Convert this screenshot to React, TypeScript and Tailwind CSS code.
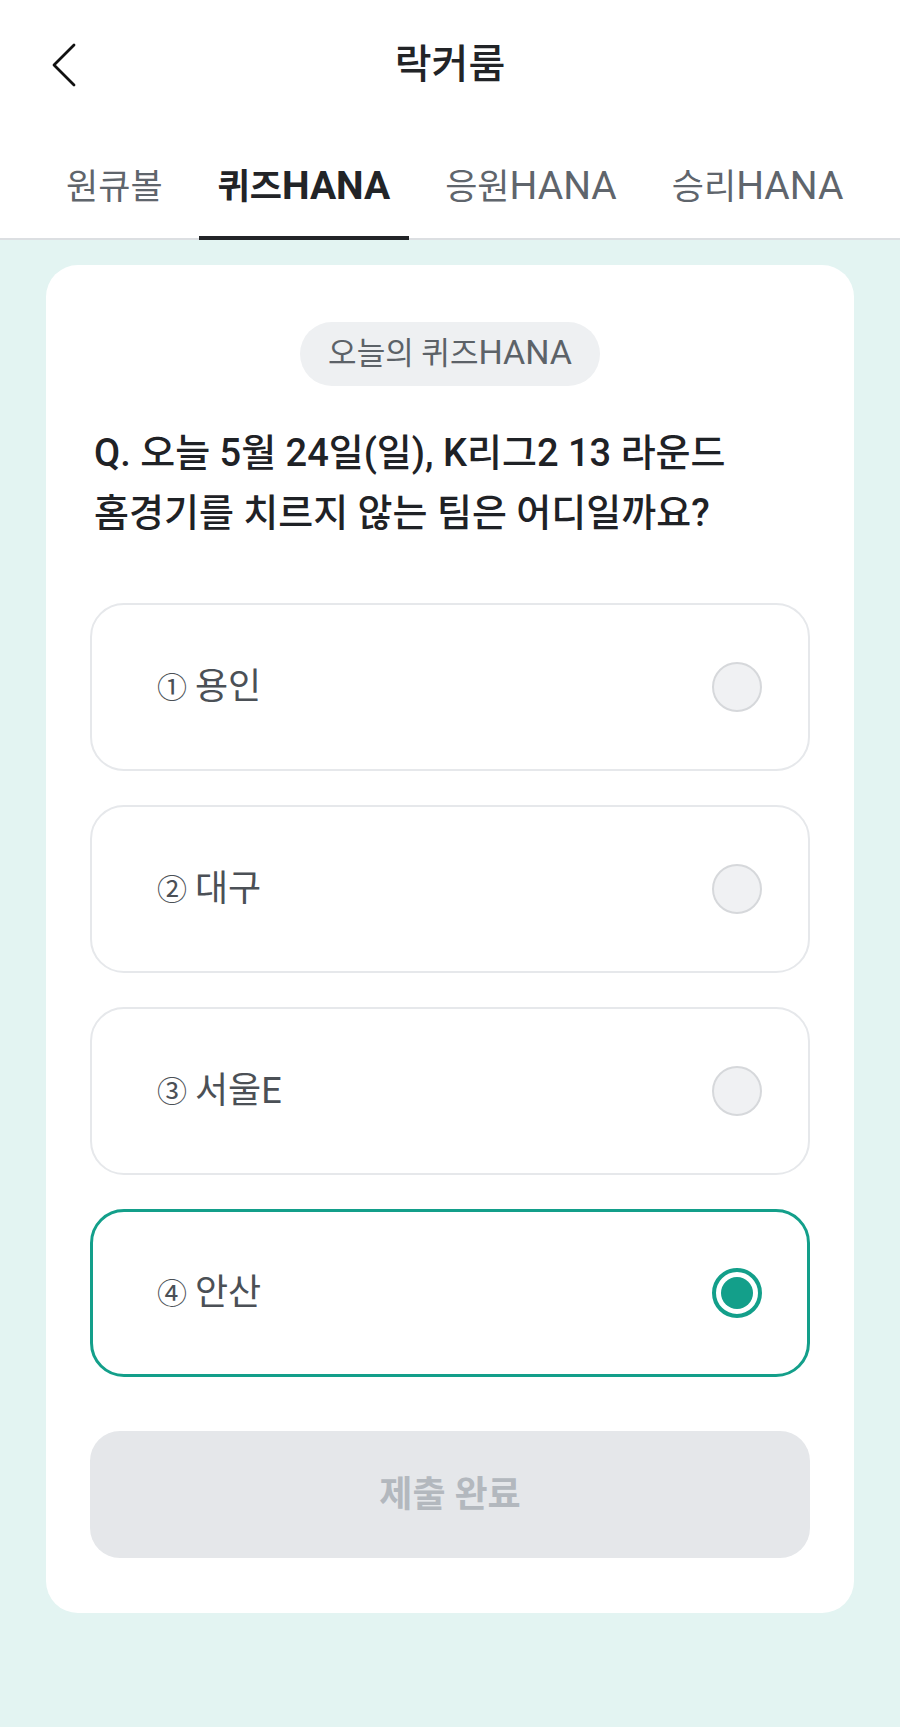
import { useState } from "react";

const FONT = "font-['Roboto','Noto_Sans_CJK_KR',sans-serif]";

const tabs = [
  { ko: "원큐볼", en: "" },
  { ko: "퀴즈", en: "HANA" },
  { ko: "응원", en: "HANA" },
  { ko: "승리", en: "HANA" },
];

const options = [
  { no: "①", label: "용인" },
  { no: "②", label: "대구" },
  { no: "③", label: "서울E" },
  { no: "④", label: "안산" },
];

export default function App() {
  const [activeTab, setActiveTab] = useState(1);
  const [picked, setPicked] = useState(3);

  return (
    <div className={`w-[900px] min-h-[1727px] bg-[#e3f4f2] ${FONT}`}>
      {/* Header */}
      <div className="bg-white">
        <div className="relative flex h-[128px] items-center justify-center">
          <button className="absolute left-[46px] top-[38px] p-1">
            <svg width="28" height="46" viewBox="0 0 28 46" fill="none" stroke="#111" strokeWidth="2.8" strokeLinecap="round" strokeLinejoin="round">
              <polyline points="24,3 4,23 24,43" />
            </svg>
          </button>
          <h1 className="mt-[2px] text-[40px] font-medium text-[#222427]">락커룸</h1>
        </div>

        {/* Tabs */}
        <div className="flex h-[112px] gap-[17px] border-b-2 border-[#dcdfe2] pl-[47px]">
          {tabs.map((t, i) => (
            <button
              key={t.ko}
              onClick={() => setActiveTab(i)}
              className={
                i === activeTab
                  ? "-mb-[2px] flex items-center border-b-4 border-[#222427] px-[19px] pt-[13px] text-[35px] font-bold text-[#222427]"
                  : "-mb-[2px] flex items-center border-b-4 border-transparent px-[19px] pt-[13px] text-[35px] text-[#5f656c]"
              }
            >
              <span>
                {t.ko}
                {t.en && <span className="text-[39px] leading-none">{t.en}</span>}
              </span>
            </button>
          ))}
        </div>
      </div>

      {/* Quiz card */}
      <div className="px-[46px] pt-[25px] pb-[113px]">
        <div className="rounded-[32px] bg-white px-[44px] pt-[57px] pb-[55px]">
          <div className="flex justify-center">
            <div className="flex h-[64px] items-center rounded-full bg-[#eef0f2] px-[28px] text-[31px] text-[#5c6268]">
              <span>
                오늘의 퀴즈<span className="text-[34px] leading-none">HANA</span>
              </span>
            </div>
          </div>

          <p className="mt-[37px] pl-[4px] text-[38px] font-medium leading-[60px] text-[#1f2226]">
            Q. 오늘 5월 24일(일), K리그2 13 라운드
            <br />
            홈경기를 치르지 않는 팀은 어디일까요?
          </p>

          <div className="mt-[60px] flex flex-col gap-[34px]">
            {options.map((o, i) => {
              const on = picked === i;
              return (
                <button
                  key={o.label}
                  onClick={() => setPicked(i)}
                  className={
                    on
                      ? "flex h-[168px] items-center justify-between rounded-[34px] border-[3px] border-[#139f8a] pl-[64px] pr-[45px]"
                      : "flex h-[168px] items-center justify-between rounded-[34px] border-2 border-[#e6e8eb] pl-[65px] pr-[46px]"
                  }
                >
                  <span className="flex items-center gap-[8px] text-[36px] text-[#4b5056]">
                    <span className="text-[30px]">{o.no}</span>
                    {o.label}
                  </span>
                  {on ? (
                    <span className="flex h-[50px] w-[50px] items-center justify-center rounded-full border-[4px] border-[#139f8a]">
                      <span className="h-[32px] w-[32px] rounded-full bg-[#139f8a]" />
                    </span>
                  ) : (
                    <span className="h-[50px] w-[50px] rounded-full border-2 border-[#d6d8db] bg-[#f0f1f3]" />
                  )}
                </button>
              );
            })}
          </div>

          <button className="mt-[54px] flex h-[127px] w-full items-center justify-center rounded-[30px] bg-[#e5e7ea] text-[36px] font-semibold text-[#b3b8be]">
            제출 완료
          </button>
        </div>
      </div>
    </div>
  );
}
